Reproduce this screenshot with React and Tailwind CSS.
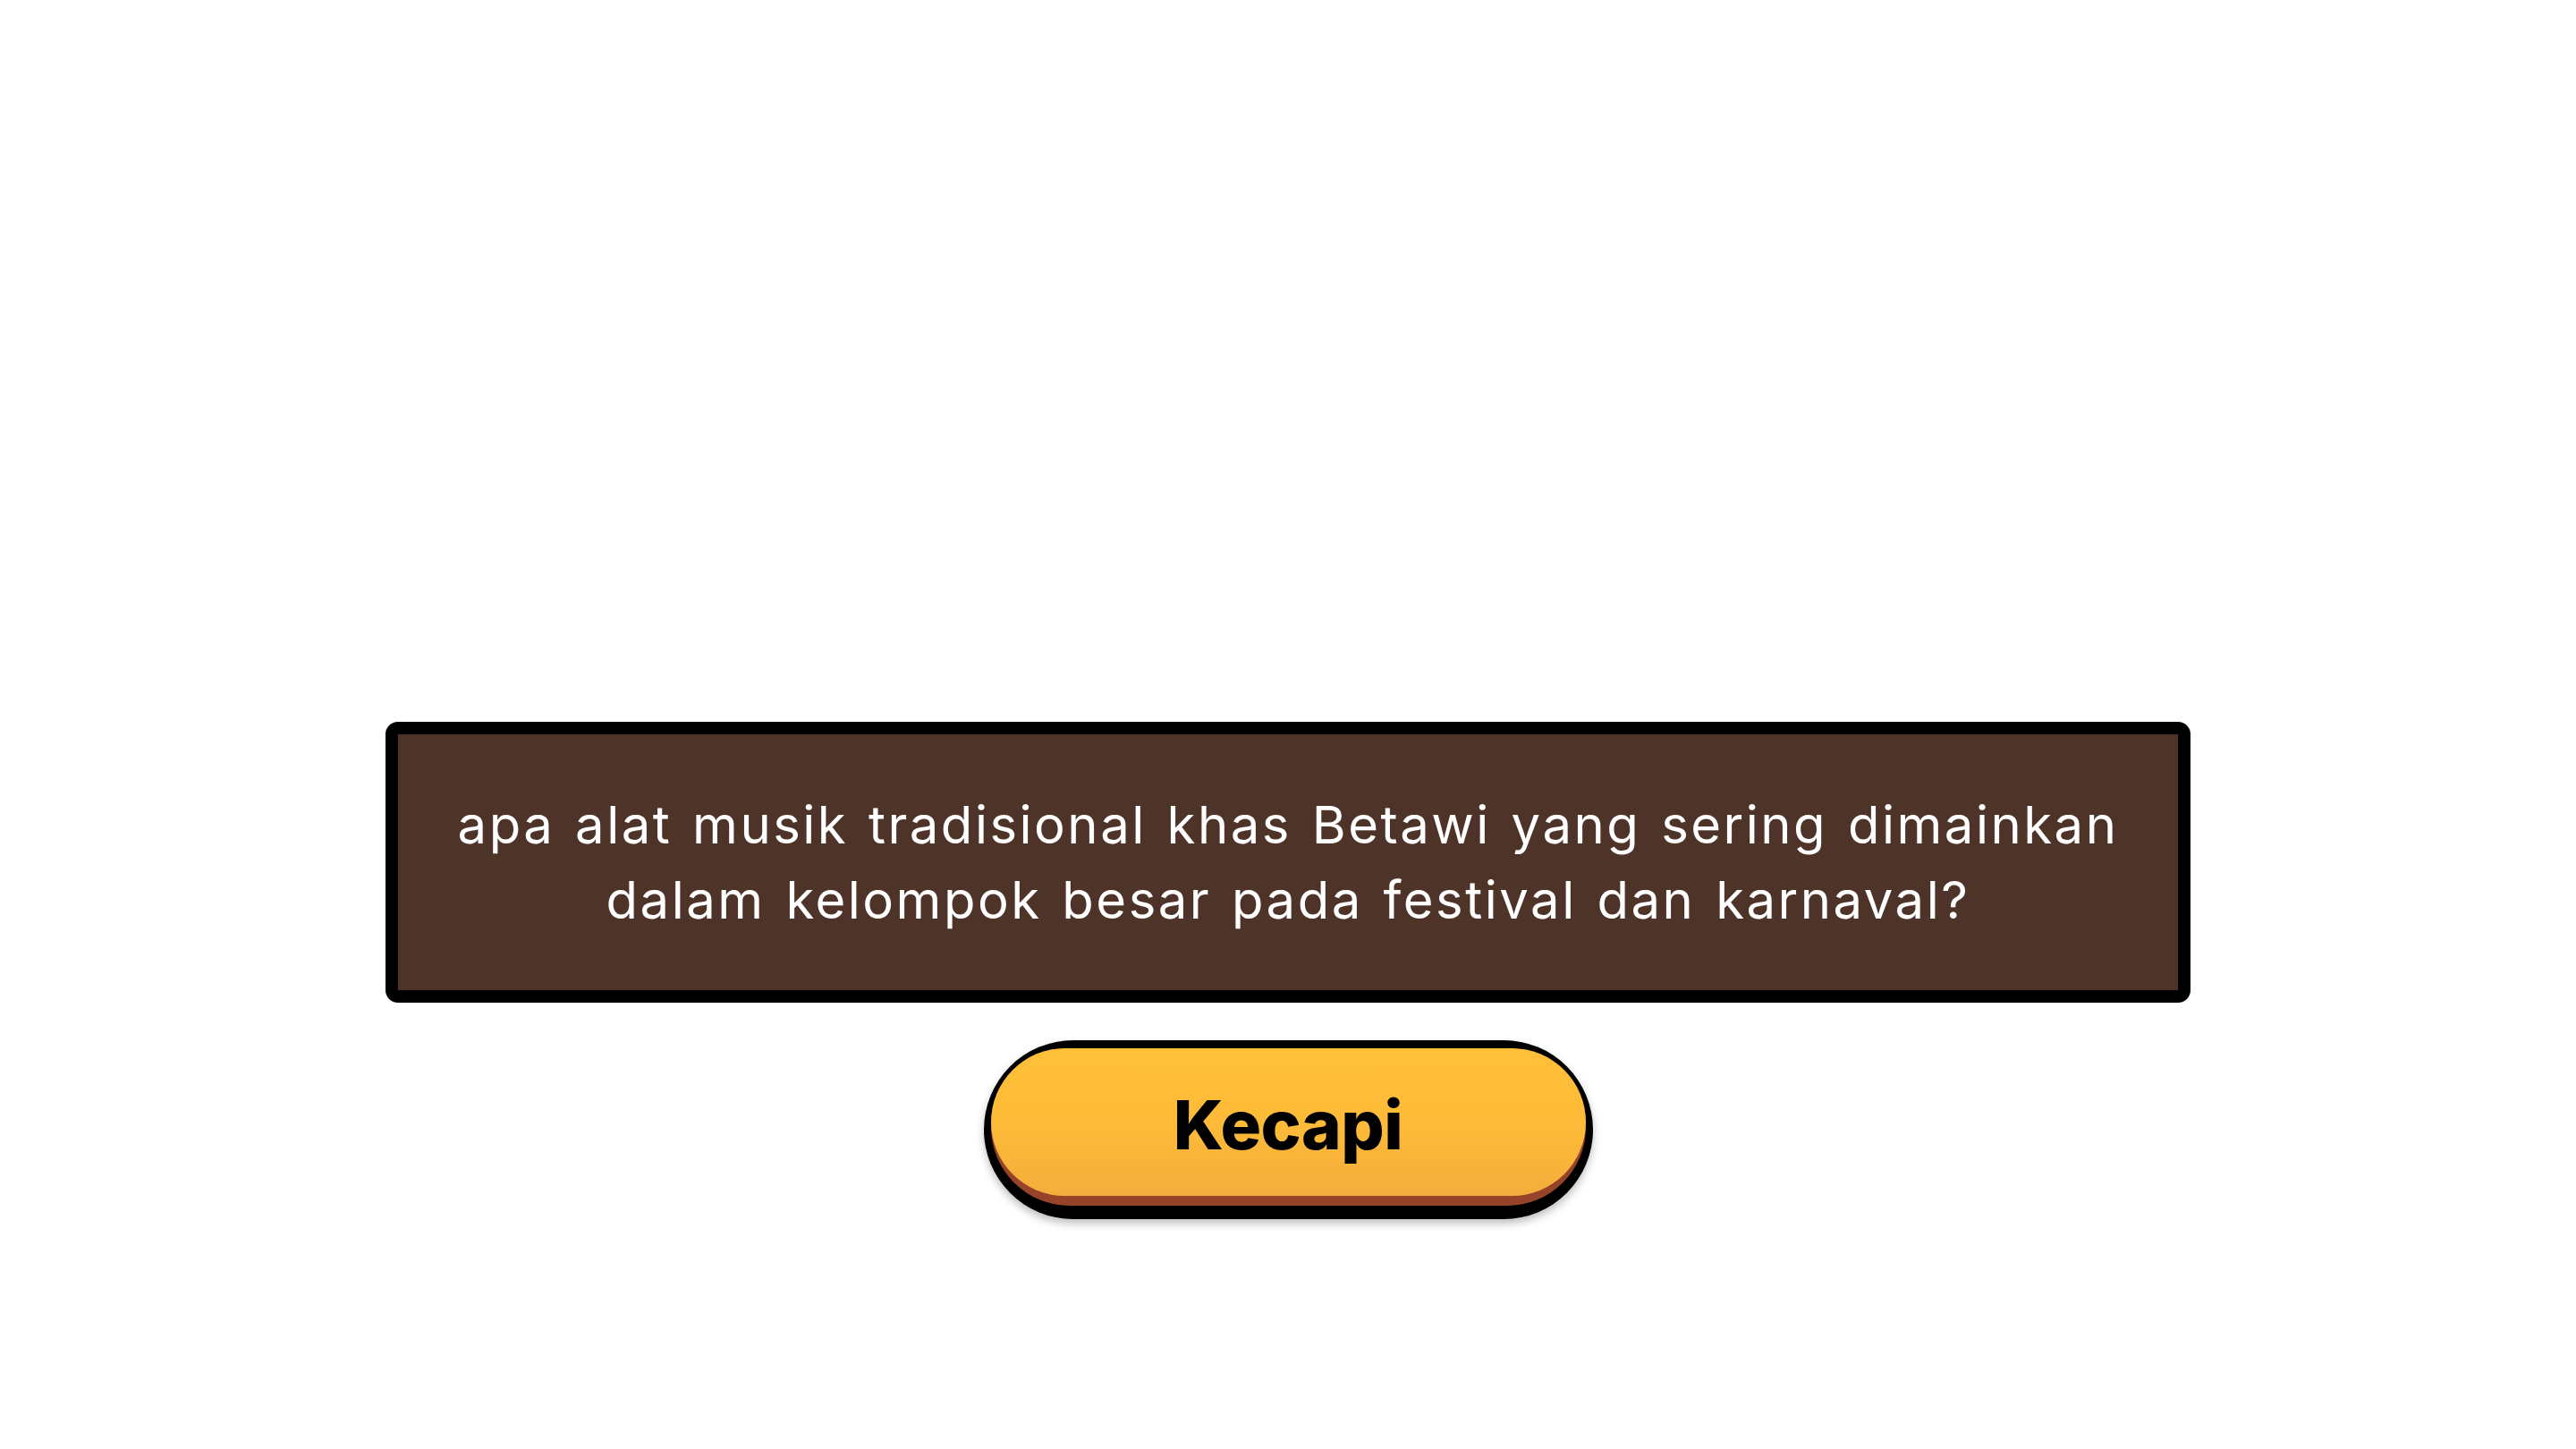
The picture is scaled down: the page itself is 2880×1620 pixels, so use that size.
export default function App() {
  return (
    <div className="min-h-screen w-full bg-white flex flex-col items-center">
      {/* empty stage above the question */}
      <div className="h-[807px] w-full" />

      {/* question box */}
      <div className="w-[2018px] h-[314px] border-[14px] border-black rounded-[14px] bg-[#4e3329] flex items-center justify-center">
        <p
          className="text-white text-center text-[58px] leading-[84px] font-normal tracking-[2.5px] [word-spacing:4px]"
          style={{ fontFamily: 'Inter, "Noto Sans", sans-serif' }}
        >
          apa alat musik tradisional khas Betawi yang sering dimainkan
          <br />
          dalam kelompok besar pada festival dan karnaval?
        </p>
      </div>

      {/* answer button */}
      <div className="mt-[42px] w-[681px] h-[200px] rounded-full bg-black pt-[9px] px-[8px] pb-[15px] shadow-[0_5px_10px_rgba(0,0,0,0.25)]">
        <div className="h-full w-full rounded-full bg-[#97432a]">
          <div className="h-[165px] w-full rounded-full bg-gradient-to-b from-[#ffc038] via-[#fdba38] via-55% to-[#f4ad3c] flex items-center justify-center">
            <span
              className="text-black text-[76px] font-extrabold leading-none tracking-[-0.5px] translate-y-[2px]"
              style={{ fontFamily: 'Inter, sans-serif' }}
            >
              Kecapi
            </span>
          </div>
        </div>
      </div>
    </div>
  );
}
